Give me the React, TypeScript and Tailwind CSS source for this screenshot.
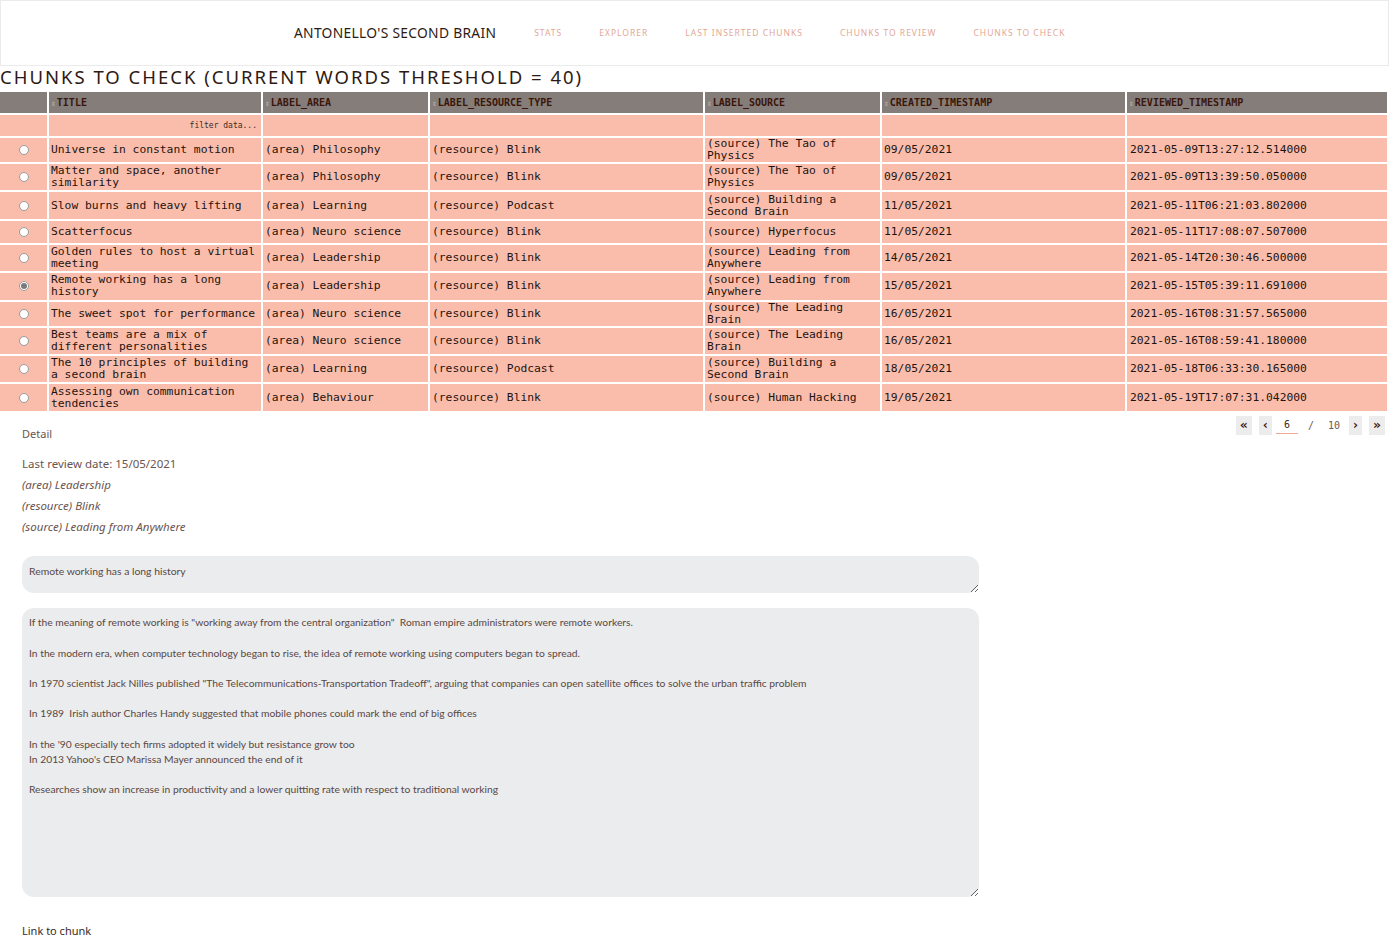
import React, { useState } from 'react';

const rows = [
  { title: 'Universe in constant motion', area: 'Philosophy', res: 'Blink', source: 'The Tao of Physics', created: '09/05/2021', reviewed: '2021-05-09T13:27:12.514000' },
  { title: 'Matter and space, another similarity', area: 'Philosophy', res: 'Blink', source: 'The Tao of Physics', created: '09/05/2021', reviewed: '2021-05-09T13:39:50.050000' },
  { title: 'Slow burns and heavy lifting', area: 'Learning', res: 'Podcast', source: 'Building a Second Brain', created: '11/05/2021', reviewed: '2021-05-11T06:21:03.802000' },
  { title: 'Scatterfocus', area: 'Neuro science', res: 'Blink', source: 'Hyperfocus', created: '11/05/2021', reviewed: '2021-05-11T17:08:07.507000' },
  { title: 'Golden rules to host a virtual meeting', area: 'Leadership', res: 'Blink', source: 'Leading from Anywhere', created: '14/05/2021', reviewed: '2021-05-14T20:30:46.500000' },
  { title: 'Remote working has a long history', area: 'Leadership', res: 'Blink', source: 'Leading from Anywhere', created: '15/05/2021', reviewed: '2021-05-15T05:39:11.691000' },
  { title: 'The sweet spot for performance', area: 'Neuro science', res: 'Blink', source: 'The Leading Brain', created: '16/05/2021', reviewed: '2021-05-16T08:31:57.565000' },
  { title: 'Best teams are a mix of different personalities', area: 'Neuro science', res: 'Blink', source: 'The Leading Brain', created: '16/05/2021', reviewed: '2021-05-16T08:59:41.180000' },
  { title: 'The 10 principles of building a second brain', area: 'Learning', res: 'Podcast', source: 'Building a Second Brain', created: '18/05/2021', reviewed: '2021-05-18T06:33:30.165000' },
  { title: 'Assessing own communication tendencies', area: 'Behaviour', res: 'Blink', source: 'Human Hacking', created: '19/05/2021', reviewed: '2021-05-19T17:07:31.042000' },
];

const columns = ['TITLE', 'LABEL_AREA', 'LABEL_RESOURCE_TYPE', 'LABEL_SOURCE', 'CREATED_TIMESTAMP', 'REVIEWED_TIMESTAMP'];
const widths = ['w-[49px]', 'w-[214px]', 'w-[167px]', 'w-[275px]', 'w-[177px]', 'w-[245px]', 'w-[262px]'];

const body = `If the meaning of remote working is "working away from the central organization"  Roman empire administrators were remote workers.

In the modern era, when computer technology began to rise, the idea of remote working using computers began to spread.

In 1970 scientist Jack Nilles published "The Telecommunications-Transportation Tradeoff", arguing that companies can open satellite offices to solve the urban traffic problem

In 1989  Irish author Charles Handy suggested that mobile phones could mark the end of big offices

In the '90 especially tech firms adopted it widely but resistance grow too
In 2013 Yahoo's CEO Marissa Mayer announced the end of it

Researches show an increase in productivity and a lower quitting rate with respect to traditional working`;

function SortIcon() {
  return <span className="text-[#b8aca8] text-[8px] mr-[1px]">⇕</span>;
}

function Radio({ checked, onClick }: { checked: boolean; onClick: () => void }) {
  return (
    <span onClick={onClick} className="inline-flex w-[10px] h-[10px] rounded-full border border-[#9a9a9a] bg-white items-center justify-center cursor-pointer align-middle">
      {checked && <span className="w-[6px] h-[6px] rounded-full bg-[#7a7a7a]" />}
    </span>
  );
}

export default function App() {
  const [selected, setSelected] = useState(5);
  const nav = ['STATS', 'EXPLORER', 'LAST INSERTED CHUNKS', 'CHUNKS TO REVIEW', 'CHUNKS TO CHECK'];
  const cell = 'border-r-2 border-b-2 border-white px-[2px] align-middle';
  const pageBtn = 'h-[19px] bg-[#ececec] flex items-center justify-center font-bold text-[13px] text-[#3a1509]';

  return (
    <div className="w-[1389px] bg-white min-h-[939px]" style={{ fontFamily: '"Noto Sans", sans-serif' }}>
      <div className="h-[66px] border border-[#ebebeb] flex items-center pl-[293px]">
        <span className="text-[13.8px] text-[#2e1a14] tracking-[0.3px]">ANTONELLO'S SECOND BRAIN</span>
        <div className="flex gap-[37px] ml-[38px]">
          {nav.map((n) => (
            <span key={n} className="text-[8.5px] tracking-[1px] text-[#e3a796]">{n}</span>
          ))}
        </div>
      </div>

      <h1 className="h-[26px] text-[18.5px] tracking-[2px] text-[#2e1a14] leading-[22px]">CHUNKS TO CHECK (CURRENT WORDS THRESHOLD = 40)</h1>

      <table className="border-separate border-spacing-0 table-fixed w-[1389px]" style={{ fontFamily: '"DejaVu Sans Mono", monospace' }}>
        <thead>
          <tr className="bg-[#857d79]">
            <th className={`${widths[0]} ${cell} h-[23px]`} />
            {columns.map((c, i) => (
              <th key={c} className={`${widths[i + 1]} ${cell} h-[23px] text-left text-[10px] font-bold text-[#3a1509]`}>
                <SortIcon />
                {c}
              </th>
            ))}
          </tr>
        </thead>
        <tbody className="bg-[#fbbdab] text-[11.3px] leading-[12px] text-[#1d1410]">
          <tr>
            <td className={`${cell} h-[23px]`} />
            <td className={`${cell} h-[23px] text-right text-[8px] pr-[4px] text-[#3a2a24]`}>filter data...</td>
            <td className={cell} />
            <td className={cell} />
            <td className={cell} />
            <td className={cell} />
            <td className={cell} />
          </tr>
          {rows.map((r, i) => {
            const short = r.title.length <= 30 && r.source.length <= 18;
            const h = short ? 'h-[24px]' : 'h-[28.4px]';
            return (
              <tr key={r.title}>
                <td className={`${cell} ${h} text-center`}>
                  <Radio checked={selected === i} onClick={() => setSelected(i)} />
                </td>
                <td className={cell}>{r.title}</td>
                <td className={cell}>(area) {r.area}</td>
                <td className={cell}>(resource) {r.res}</td>
                <td className={cell}>(source) {r.source}</td>
                <td className={cell}>{r.created}</td>
                <td className={`${cell} pl-[3px]`}>{r.reviewed}</td>
              </tr>
            );
          })}
        </tbody>
      </table>

      <div className="flex items-start justify-between pl-[22px] pr-[4px]">
        <div className="text-[11px] text-[#6a5550] mt-[13px]">Detail</div>
        <div className="flex items-center mt-[3px] text-[10px]" style={{ fontFamily: '"DejaVu Sans Mono", monospace' }}>
          <span className={`${pageBtn} w-[16px]`}>«</span>
          <span className={`${pageBtn} w-[13px] ml-[7px]`}>‹</span>
          <span className="w-[22px] text-center border-b border-[#f0a89a] text-[#3a2a24] ml-[4px] leading-[17px]">6</span>
          <span className="text-[#6a5a55] ml-[10px]">/</span>
          <span className="text-[#6a5a55] ml-[14px]">10</span>
          <span className={`${pageBtn} w-[13px] ml-[9px]`}>›</span>
          <span className={`${pageBtn} w-[16px] ml-[7px]`}>»</span>
        </div>
      </div>

      <div className="pl-[22px] text-[11.5px] text-[#6a5550]">
        <div className="mt-[11px] leading-[21px]">Last review date: 15/05/2021</div>
        <div className="italic leading-[21px]">(area) Leadership</div>
        <div className="italic leading-[21px]">(resource) Blink</div>
        <div className="italic leading-[21px]">(source) Leading from Anywhere</div>

        <textarea
          readOnly
          value="Remote working has a long history"
          className="block mt-[19px] w-[957px] h-[37px] bg-[#ebecee] rounded-[12px] px-[7px] pt-[8px] text-[10.4px] text-[#5a4742] outline-none resize-y"
          style={{ fontFamily: 'Lato, sans-serif' }}
        />
        <textarea
          readOnly
          value={body}
          className="block mt-[15px] w-[957px] h-[289px] bg-[#ebecee] rounded-[12px] px-[7px] pt-[7px] text-[10.3px] leading-[15.2px] text-[#5a4742] outline-none resize-y"
          style={{ fontFamily: 'Lato, sans-serif' }}
        />
        <div className="mt-[26px] text-[11px] text-[#3a2a24]">Link to chunk</div>
      </div>
    </div>
  );
}
